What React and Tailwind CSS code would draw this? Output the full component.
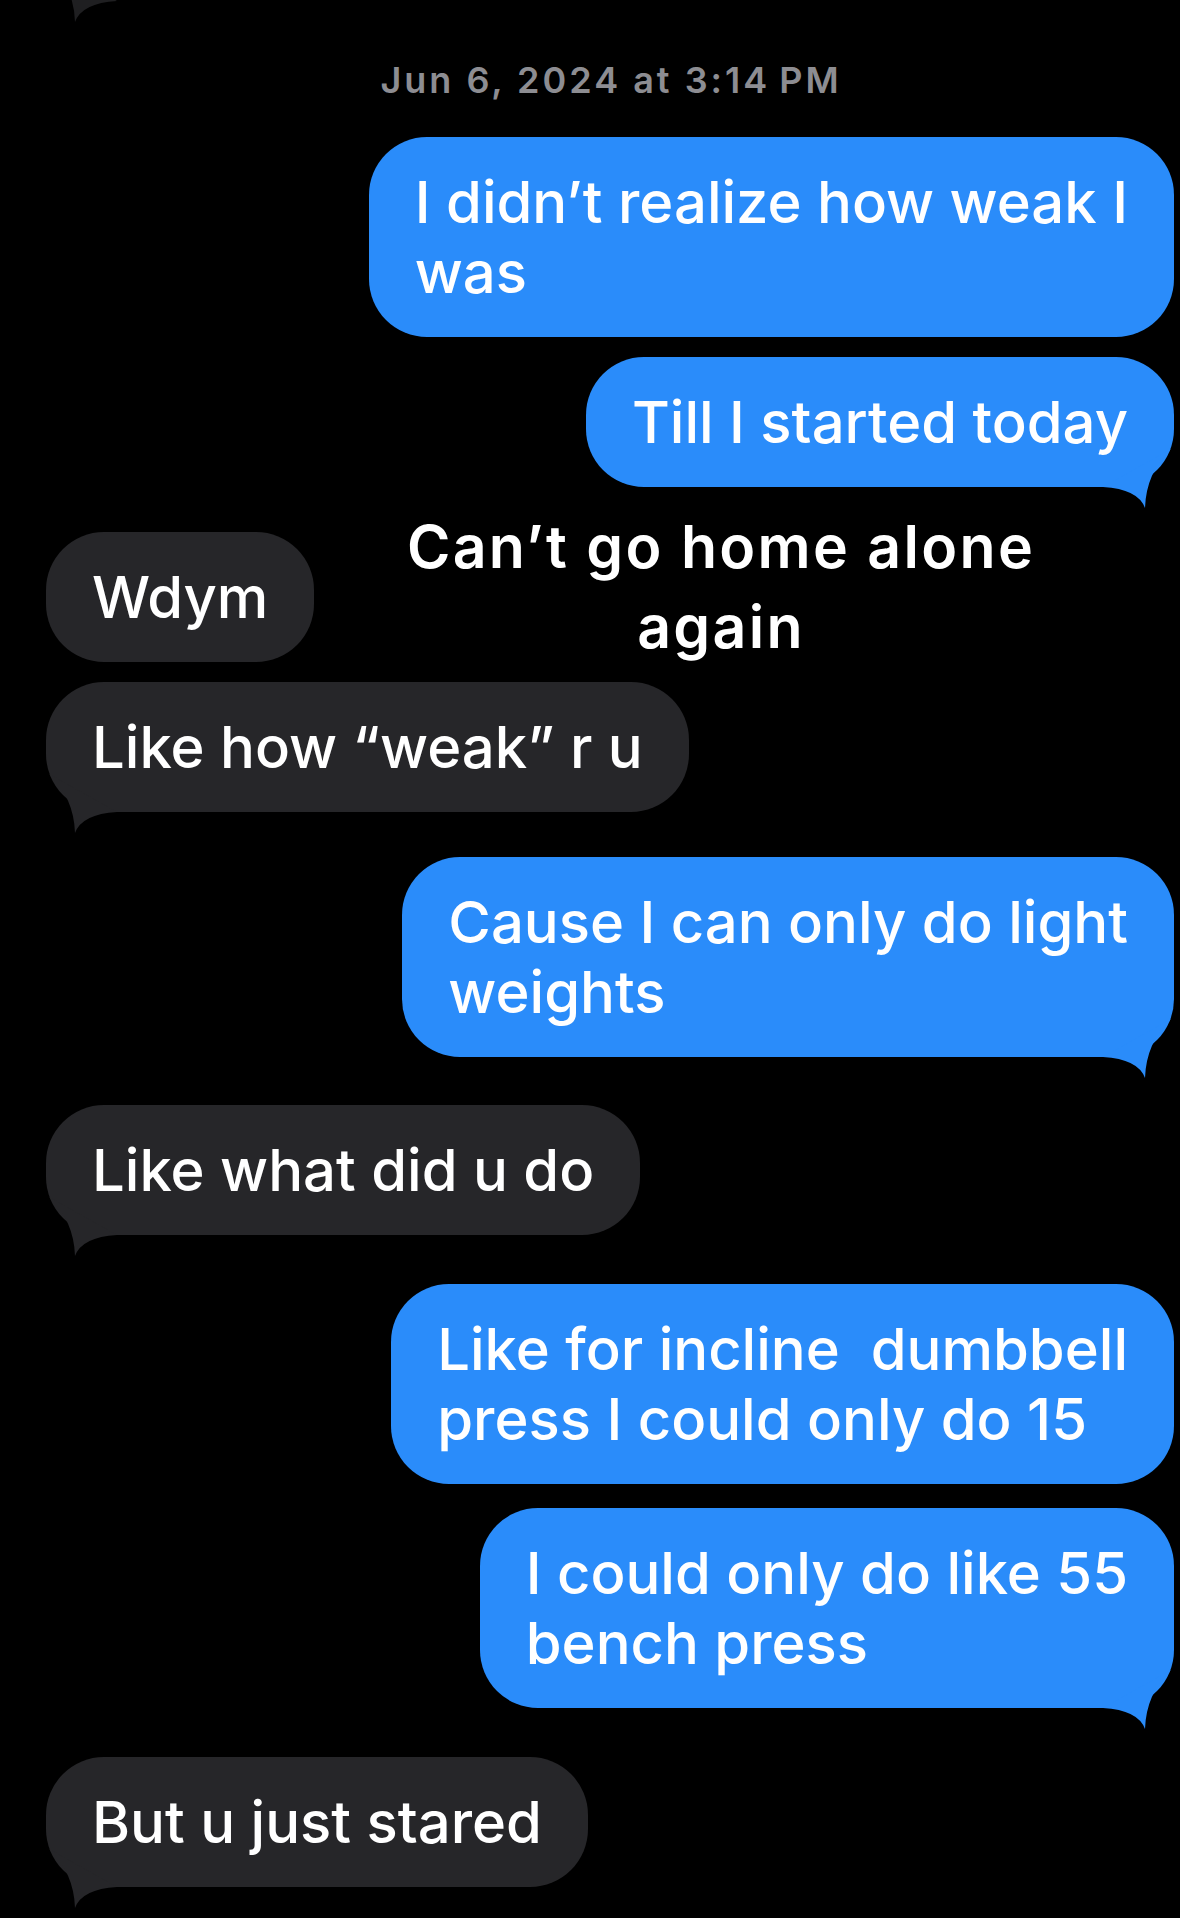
import React from "react";

const messages = [
  { from: "me", mt: "mt-[35px]", tail: false, lines: ["I didn\u2019t realize how weak I", "was"] },
  { from: "me", mt: "mt-[20px]", tail: true, lines: ["Till I started today"] },
  { from: "them", mt: "mt-[45px]", tail: false, lines: ["Wdym"] },
  { from: "them", mt: "mt-[20px]", tail: true, lines: ["Like how \u201cweak\u201d r u"] },
  { from: "me", mt: "mt-[45px]", tail: true, lines: ["Cause I can only do light", "weights"] },
  { from: "them", mt: "mt-[48px]", tail: true, lines: ["Like what did u do"] },
  { from: "me", mt: "mt-[49px]", tail: false, lines: ["Like for incline\u00a0 dumbbell", "press I could only do 15"] },
  { from: "me", mt: "mt-[24px]", tail: true, lines: ["I could only do like 55", "bench press"] },
  { from: "them", mt: "mt-[49px]", tail: true, lines: ["But u just stared"] },
];

const GrayTail = ({ fill = "#262629" }) => (
  <svg
    className="absolute left-0 bottom-[-24px] w-[80px] h-[64px]"
    viewBox="0 -40 80 64"
  >
    <path d="M3 -38 Q28 -14 29 21 Q36 2 71 0 Z" fill={fill} />
  </svg>
);

const BlueTail = () => (
  <svg
    className="absolute right-0 bottom-[-24px] w-[80px] h-[64px]"
    viewBox="-80 -40 80 64"
  >
    <path d="M-3 -38 Q-28 -14 -29 21 Q-36 2 -71 0 Z" fill="#2a8cfa" />
  </svg>
);

const Bubble = ({ msg }) => {
  const mine = msg.from === "me";
  return (
    <div className={`flex ${mine ? "justify-end pr-[6px]" : "justify-start pl-[46px]"} ${msg.mt}`}>
      <div
        className={`relative rounded-[58px] px-[46px] py-[30px] whitespace-nowrap text-white text-[58px] leading-[70px] font-medium ${
          mine ? "bg-[#2a8cfa]" : "bg-[#262629]"
        }`}
      >
        {msg.tail && (mine ? <BlueTail /> : <GrayTail />)}
        <span className="relative">
          {msg.lines.map((line, i) => (
            <React.Fragment key={i}>
              {i > 0 && <br />}
              {line}
            </React.Fragment>
          ))}
        </span>
      </div>
    </div>
  );
};

export default function App() {
  return (
    <div
      className="relative w-full h-[1918px] overflow-hidden bg-black"
      style={{ fontFamily: "Inter, Roboto, 'Liberation Sans', sans-serif" }}
    >
      <div className="flex flex-col">
        {/* tail of the previous message, cut off at the top */}
        <div className="relative h-px ml-[46px]">
          <GrayTail fill="#1f1f21" />
        </div>

        {/* timestamp */}
        <div className="flex justify-center pl-[42px] mt-[57px]">
          <span className="text-[36px] leading-[44px] font-semibold tracking-[3px] text-[#8d8d92]">
            Jun 6, 2024 at 3:14&thinsp;PM
          </span>
        </div>

        {messages.map((m, i) => (
          <Bubble key={i} msg={m} />
        ))}
      </div>

      {/* caption overlay */}
      <div className="absolute left-[262px] right-0 top-[507px] text-center text-white text-[59px] leading-[80px] font-semibold tracking-[2.3px]">
        Can&rsquo;t go home alone
        <br />
        again
      </div>
    </div>
  );
}
